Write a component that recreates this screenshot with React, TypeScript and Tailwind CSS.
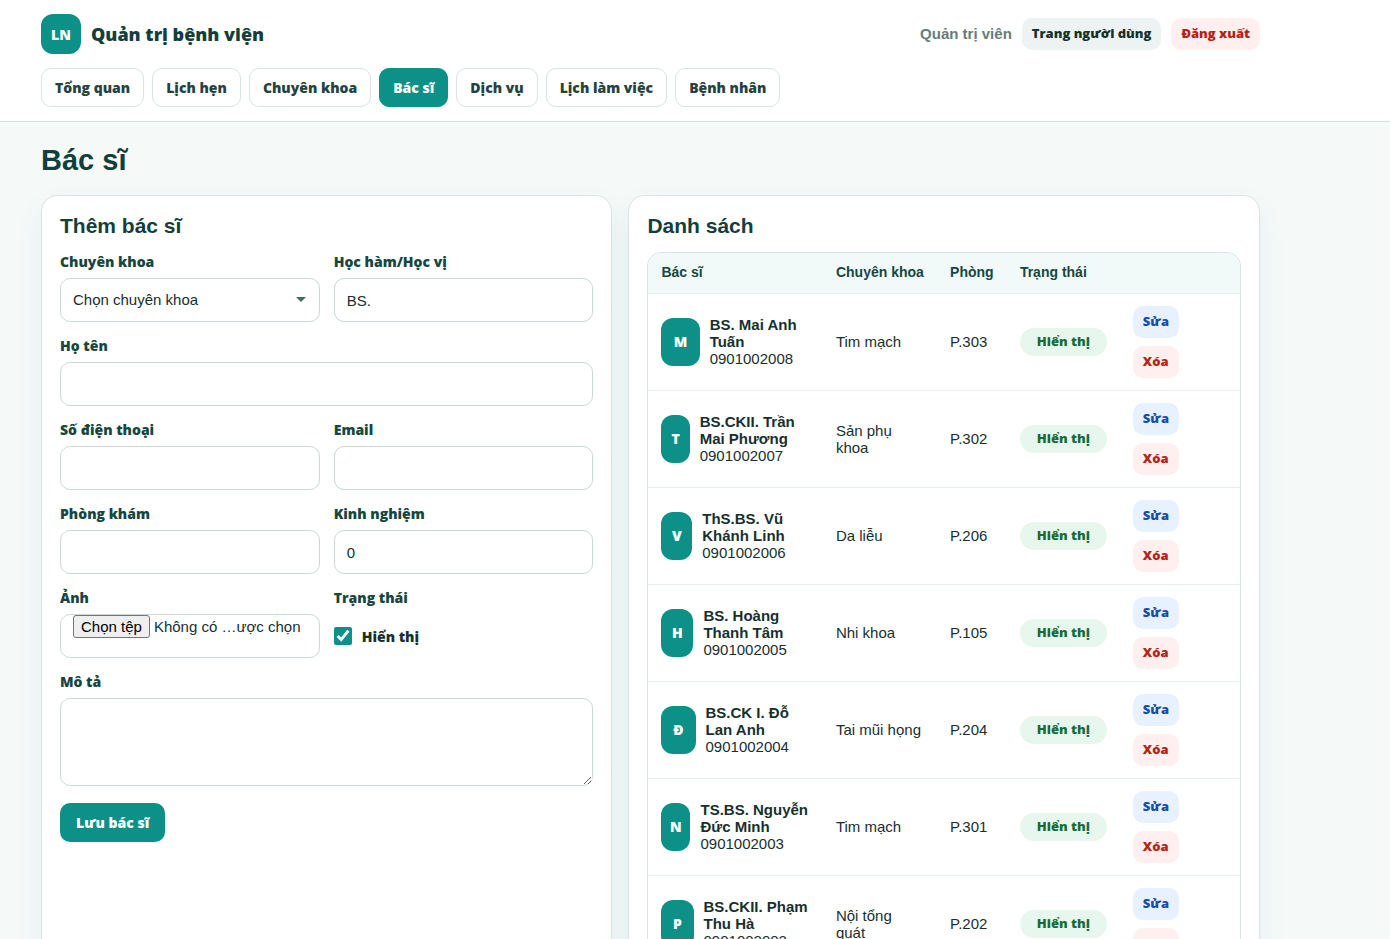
import type { ReactNode } from "react";
import { clsx } from "clsx";

const navItems = ["Tổng quan", "Lịch hẹn", "Chuyên khoa", "Bác sĩ", "Dịch vụ", "Lịch làm việc", "Bệnh nhân"];

const doctors = [
  { initial: "M", name: "BS. Mai Anh Tuấn", phone: "0901002008", specialty: "Tim mạch", room: "P.303" },
  { initial: "T", name: "BS.CKII. Trần Mai Phương", phone: "0901002007", specialty: "Sản phụ khoa", room: "P.302" },
  { initial: "V", name: "ThS.BS. Vũ Khánh Linh", phone: "0901002006", specialty: "Da liễu", room: "P.206" },
  { initial: "H", name: "BS. Hoàng Thanh Tâm", phone: "0901002005", specialty: "Nhi khoa", room: "P.105" },
  { initial: "Đ", name: "BS.CK I. Đỗ Lan Anh", phone: "0901002004", specialty: "Tai mũi họng", room: "P.204" },
  { initial: "N", name: "TS.BS. Nguyễn Đức Minh", phone: "0901002003", specialty: "Tim mạch", room: "P.301" },
  { initial: "P", name: "BS.CKII. Phạm Thu Hà", phone: "0901002002", specialty: "Nội tổng quát", room: "P.202" },
];

const heavy = "font-['Open_Sans','Liberation_Sans',sans-serif] font-extrabold";
const control = "h-11 w-full rounded-[10px] border border-[#c8dad6] bg-white px-3 text-[15px] text-[#17302e]";
const smallButton = "inline-flex h-8 items-center rounded-[10px] px-[10px] text-[13px]";

interface FieldProps {
  id: string;
  label: string;
  wide?: boolean;
  children: ReactNode;
}

function Field({ id, label, wide, children }: FieldProps) {
  return (
    <div className={clsx("flex min-w-0 flex-col gap-[6px]", wide && "col-span-2")}>
      <label htmlFor={id} className={clsx(heavy, "text-[14px] leading-5 text-[#174640]")}>
        {label}
      </label>
      {children}
    </div>
  );
}

function Card({ title, children }: { title: string; children: ReactNode }) {
  return (
    <section className="min-w-0 rounded-2xl border border-[#d6e5e2] bg-white p-[18px] shadow-[0_12px_28px_rgba(15,80,100,0.07)]">
      <h2 className="mb-[14px] text-[21px] leading-6 font-bold text-[#123f3b]">{title}</h2>
      {children}
    </section>
  );
}

function Header() {
  return (
    <header className="border-b border-[#d6e3e0] bg-white py-[14px]">
      <div className="mx-[41px] flex max-w-[1219px] flex-col gap-[14px]">
        <div className="flex items-center justify-between">
          <div className="flex items-center gap-[10px]">
            <span className={clsx(heavy, "grid size-10 place-items-center rounded-xl bg-[#0d9088] text-[14px] text-white")}>
              LN
            </span>
            <span className={clsx(heavy, "text-[18px] text-[#123f3b]")}>Quản trị bệnh viện</span>
          </div>
          <div className="flex items-center gap-[10px]">
            <span className="text-[15px] font-bold text-[#667c79]">Quản trị viên</span>
            <a href="#" className={clsx(heavy, smallButton, "bg-[#edf3f2] text-[#17302e]")}>
              Trang người dùng
            </a>
            <button type="button" className={clsx(heavy, smallButton, "bg-[#ffefee] text-[#b42318]")}>
              Đăng xuất
            </button>
          </div>
        </div>
        <nav className="flex flex-wrap gap-2">
          {navItems.map((item) => (
            <a
              key={item}
              href="#"
              className={clsx(
                heavy,
                "flex h-[39px] items-center rounded-[10px] border px-[13px] text-[14px]",
                item === "Bác sĩ" ? "border-[#0d9088] bg-[#0d9088] text-white" : "border-[#d6e5e2] bg-white text-[#24433f]"
              )}
            >
              {item}
            </a>
          ))}
        </nav>
      </div>
    </header>
  );
}

function DoctorForm() {
  return (
    <form className="grid grid-cols-2 gap-[14px]">
      <Field id="specialty" label="Chuyên khoa">
        <div className="relative">
          <select id="specialty" className={clsx(control, "appearance-none")}>
            <option>Chọn chuyên khoa</option>
          </select>
          <svg viewBox="0 0 10 5" className="pointer-events-none absolute top-[19px] right-[14px] h-[5px] w-[10px] fill-[#426b64]">
            <path d="M0 0h10L5 5z" />
          </svg>
        </div>
      </Field>
      <Field id="degree" label="Học hàm/Học vị">
        <input id="degree" className={control} defaultValue="BS." />
      </Field>
      <Field id="name" label="Họ tên" wide>
        <input id="name" className={control} />
      </Field>
      <Field id="phone" label="Số điện thoại">
        <input id="phone" className={control} />
      </Field>
      <Field id="email" label="Email">
        <input id="email" type="email" className={control} />
      </Field>
      <Field id="room" label="Phòng khám">
        <input id="room" className={control} />
      </Field>
      <Field id="experience" label="Kinh nghiệm">
        <input id="experience" type="number" className={control} defaultValue="0" />
      </Field>
      <Field id="photo" label="Ảnh">
        <div className={clsx(control, "relative flex items-start gap-1 whitespace-nowrap")}>
          <span className="rounded-[3px] border border-[#767676] bg-[#efefef] px-[7px] leading-[21px] text-black">Chọn tệp</span>
          <span className="leading-6">Không có …ược chọn</span>
          <input id="photo" type="file" className="absolute inset-0 opacity-0" />
        </div>
      </Field>
      <Field id="visible" label="Trạng thái">
        <div className="flex h-11 items-center gap-[10px]">
          <input id="visible" type="checkbox" defaultChecked className="size-[18px] accent-[#0d9088]" />
          <label htmlFor="visible" className={clsx(heavy, "text-[14px] text-[#17302e]")}>
            Hiển thị
          </label>
        </div>
      </Field>
      <Field id="description" label="Mô tả" wide>
        <textarea
          id="description"
          className="h-[88px] w-full resize-y rounded-[10px] border border-[#c8dad6] bg-white px-3 py-[10px] text-[15px] text-[#17302e]"
        />
      </Field>
      <div className="col-span-2 pt-[3px]">
        <button type="submit" className={clsx(heavy, "h-[39px] rounded-[10px] bg-[#0d9088] px-4 text-[14px] text-white")}>
          Lưu bác sĩ
        </button>
      </div>
    </form>
  );
}

function DoctorTable() {
  return (
    <div className="overflow-hidden rounded-[14px] border border-[#d6e5e2]">
      <table className="w-full table-fixed text-left text-[15px] leading-[17px]">
        <colgroup>
          <col className="w-[29.5%]" />
          <col className="w-[19.3%]" />
          <col className="w-[11.8%]" />
          <col className="w-[19.1%]" />
          <col />
        </colgroup>
        <thead className="bg-[#f1faf9] text-[14px] text-[#174640]">
          <tr className="h-10 border-b border-[#e6efed]">
            <th className="px-[13px]">Bác sĩ</th>
            <th className="px-[13px]">Chuyên khoa</th>
            <th className="px-[13px]">Phòng</th>
            <th className="px-[13px]">Trạng thái</th>
            <th className="px-[13px]" />
          </tr>
        </thead>
        <tbody>
          {doctors.map((doctor) => (
            <tr key={doctor.phone} className="h-[97px] border-b border-[#e6efed]">
              <td className="px-[13px]">
                <div className="flex items-center gap-[10px]">
                  <span className={clsx(heavy, "grid h-12 w-12 place-items-center rounded-xl bg-[#0d9088] text-[14px] text-white")}>
                    {doctor.initial}
                  </span>
                  <div>
                    <strong>{doctor.name}</strong>
                    <br />
                    {doctor.phone}
                  </div>
                </div>
              </td>
              <td className="px-[13px]">{doctor.specialty}</td>
              <td className="px-[13px]">{doctor.room}</td>
              <td className="px-[13px]">
                <span className={clsx(heavy, "flex h-7 items-center justify-center rounded-full bg-[#e8f7ee] text-[13px] text-[#176b35]")}>
                  Hiển thị
                </span>
              </td>
              <td className="px-[13px]">
                <div className="flex flex-col items-start gap-2">
                  <button type="button" className={clsx(heavy, smallButton, "bg-[#e8f1ff] text-[#174ea6]")}>
                    Sửa
                  </button>
                  <button type="button" className={clsx(heavy, smallButton, "bg-[#ffefee] text-[#b42318]")}>
                    Xóa
                  </button>
                </div>
              </td>
            </tr>
          ))}
        </tbody>
      </table>
    </div>
  );
}

export default function App() {
  return (
    <div className="min-h-screen bg-[#f5faf9] font-['Liberation_Sans',Arial,sans-serif] text-[#17302e]">
      <Header />
      <main className="mx-[41px] max-w-[1219px] py-5">
        <h1 className="mb-[17px] text-[29px] leading-9 font-bold text-[#123f3b]">Bác sĩ</h1>
        <div className="grid grid-cols-[0.95fr_1.05fr] gap-4">
          <Card title="Thêm bác sĩ">
            <DoctorForm />
          </Card>
          <Card title="Danh sách">
            <DoctorTable />
          </Card>
        </div>
      </main>
    </div>
  );
}
